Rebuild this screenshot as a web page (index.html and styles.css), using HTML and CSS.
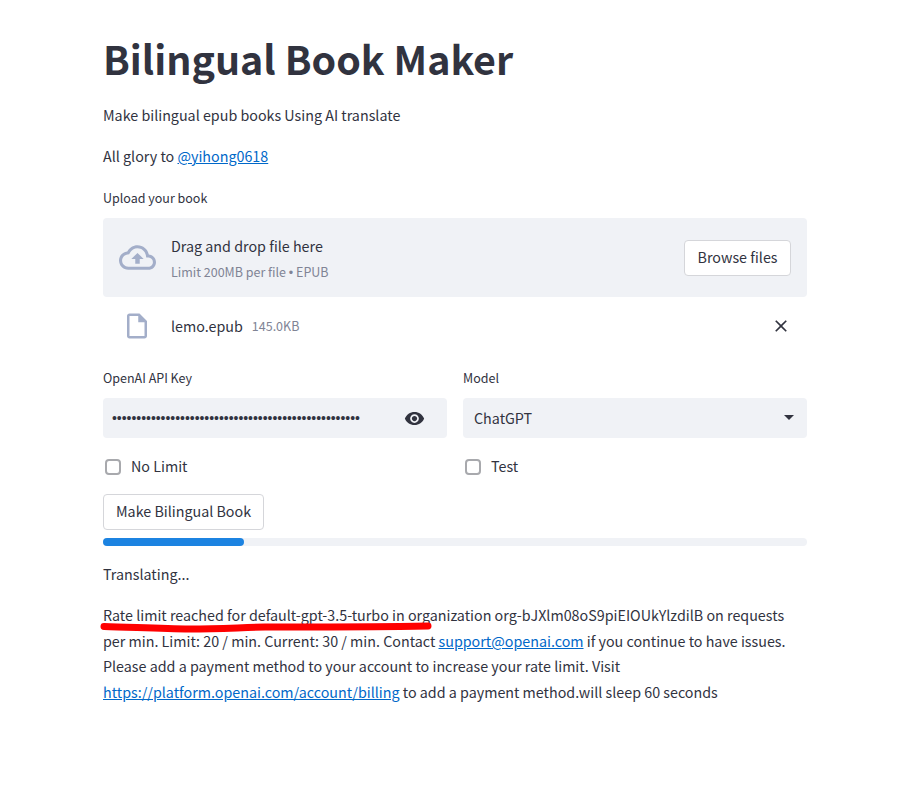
FILE: index.html
```html
<!DOCTYPE html>
<html lang="en">

<head>
    <meta charset="UTF-8">
    <meta name="viewport" content="width=device-width, initial-scale=1.0">
    <title>Bilingual Book Maker</title>
    <link rel="stylesheet" href="styles.css">
</head>

<body>
    <div class="main">
        <h1>Bilingual Book Maker</h1>
        <p class="intro">Make bilingual epub books Using AI translate</p>
        <p class="glory">All glory to <a href="#">@yihong0618</a></p>

        <div class="label upload-label">Upload your book</div>
        <div class="dropzone">
            <svg class="cloud" viewBox="0 0 24 24" width="37" height="37">
                <path fill="#a3aec9" d="M19.35 10.04C18.67 6.59 15.64 4 12 4 9.11 4 6.6 5.64 5.35 8.04 2.34 8.36 0 10.91 0 14c0 3.31 2.69 6 6 6h13c2.76 0 5-2.24 5-5 0-2.64-2.05-4.78-4.65-4.96zM19 18H6c-2.21 0-4-1.79-4-4 0-2.05 1.53-3.76 3.56-3.97l1.07-.11.5-.95C8.08 7.14 9.94 6 12 6c2.62 0 4.88 1.86 5.39 4.43l.3 1.5 1.53.11c1.56.1 2.78 1.41 2.78 2.96 0 1.65-1.35 3-3 3zM8 13h2.55v3h2.9v-3H16l-4-4z"/>
            </svg>
            <div class="drop-text">
                <div class="drop-title">Drag and drop file here</div>
                <div class="drop-limit">Limit 200MB per file <span class="sep">•</span> EPUB</div>
            </div>
            <button class="btn browse">Browse files</button>
        </div>

        <div class="file-row">
            <svg class="file-icon" viewBox="0 0 24 24" width="30" height="30">
                <path fill="#a3aec9" d="M14 2H6c-1.1 0-2 .9-2 2v16c0 1.1.9 2 2 2h12c1.1 0 2-.9 2-2V8l-6-6zM6 20V4h7v5h5v11H6z"/>
            </svg>
            <span class="file-name">lemo.epub</span>
            <span class="file-size">145.0KB</span>
            <svg class="file-close" viewBox="0 0 24 24" width="20" height="20">
                <path fill="#31333f" d="M19 6.41 17.59 5 12 10.59 6.41 5 5 6.41 10.59 12 5 17.59 6.41 19 12 13.41 17.59 19 19 17.59 13.41 12z"/>
            </svg>
        </div>

        <div class="columns">
            <div class="col">
                <div class="label">OpenAI API Key</div>
                <div class="field">
                    <span class="dots">•••••••••••••••••••••••••••••••••••••••••••••••••••</span>
                    <svg class="eye" viewBox="0 0 24 24" width="21" height="21">
                        <path fill="#31333f" d="M12 4.5C7 4.5 2.73 7.61 1 12c1.73 4.39 6 7.5 11 7.5s9.27-3.11 11-7.5c-1.73-4.39-6-7.5-11-7.5zM12 17c-2.76 0-5-2.24-5-5s2.24-5 5-5 5 2.24 5 5-2.24 5-5 5zm0-8c-1.66 0-3 1.34-3 3s1.34 3 3 3 3-1.34 3-3-1.34-3-3-3z"/>
                    </svg>
                </div>
                <label class="check"><span class="box"></span><span class="check-text">No Limit</span></label>
            </div>
            <div class="col">
                <div class="label">Model</div>
                <div class="field select">
                    <span class="select-value">ChatGPT</span>
                    <span class="caret"></span>
                </div>
                <label class="check"><span class="box"></span><span class="check-text">Test</span></label>
            </div>
        </div>

        <button class="btn make">Make Bilingual Book</button>
        <div class="progress">
            <div class="bar" style="width: 20%"></div>
        </div>

        <p class="status">Translating...</p>
        <p class="message">Rate limit reached for default-gpt-3.5-turbo in organization org-bJXlm08oS9piEIOUkYlzdilB on requests per min. Limit: 20 / min. Current: 30 / min. Contact <a href="#">support@openai.com</a> if you continue to have issues. Please add a payment method to your account to increase your rate limit. Visit <a href="#">https://platform.openai.com/account/billing</a> to add a payment method.will sleep 60 seconds</p>

        <!-- red pen mark over the first line -->
        <svg class="scribble" width="340" height="24" viewBox="0 0 340 24">
            <path d="M4 13.5 C 30 14 60 16 90 16 C 120 16 140 14.500 165 14 C 220 14 280 14 328 13" fill="none" stroke="#ff0000" stroke-width="7" stroke-linecap="round"/>
        </svg>
    </div>
</body>

</html>
```

FILE: styles.css
```css
* {
    padding: 0;
    margin: 0;
    box-sizing: border-box;
}

body {
    background-color: white;
    color: #31333f;
    font-family: "Noto Sans CJK SC", "Noto Sans", sans-serif;
    font-size: 14.3px;
}

a {
    color: #0068c9;
}

.main {
    position: relative;
    width: 704px;
    margin-left: 103px;
    padding-top: 31px;
}

h1 {
    font-size: 39.4px;
    font-weight: 700;
    line-height: 54px;
    margin-bottom: 18px;
}

.intro,
.glory,
.status {
    line-height: 24px;
}

.glory {
    margin-top: 17px;
}

.label {
    font-size: 12.5px;
    line-height: 20px;
    margin-bottom: 10px;
}

.upload-label {
    margin-top: 20px;
}

.dropzone {
    display: flex;
    align-items: center;
    height: 79px;
    padding: 0 16px;
    background-color: #f0f2f6;
    border-radius: 4px;
}

.cloud {
    margin-right: 15px;
}

.drop-text {
    flex: 1;
}

.drop-title {
    line-height: 24px;
}

.drop-limit {
    margin-top: 5px;
    font-size: 12.5px;
    line-height: 18px;
    color: #808495;
}

.sep {
    font-family: "Liberation Sans", sans-serif;
}

.btn {
    height: 36px;
    padding: 0 12px 2px;
    background-color: white;
    border: 1px solid #d5d6da;
    border-radius: 4px;
    color: #31333f;
    font-family: inherit;
    font-size: 14.3px;
    cursor: pointer;
}

.browse {
    padding: 0 12.5px 2px;
}

.file-row {
    display: flex;
    align-items: center;
    height: 58px;
    padding-left: 19px;
}

.file-icon {
    margin-right: 19px;
}

.file-name {
    margin-right: 9px;
    margin-bottom: 2px;
}

.file-size {
    margin-bottom: 2px;
    font-size: 12.5px;
    color: #808495;
}

.file-close {
    margin-left: auto;
    margin-right: 16px;
}

.columns {
    display: grid;
    grid-template-columns: 344px 344px;
    gap: 16px;
    margin-top: 13px;
}

.field {
    display: flex;
    align-items: center;
    justify-content: space-between;
    height: 40px;
    padding: 0 22px 0 9px;
    background-color: #f0f2f6;
    border-radius: 4px;
}

.dots {
    font-family: "Liberation Sans", sans-serif;
    font-size: 14px;
    letter-spacing: -0.04px;
    overflow: hidden;
    white-space: nowrap;
}

.select {
    padding: 0 13px 0 11px;
}

.select-value {
    margin-bottom: 2px;
}

.caret {
    width: 0;
    height: 0;
    margin-bottom: 1px;
    border-left: 5px solid transparent;
    border-right: 5px solid transparent;
    border-top: 5px solid #31333f;
}

.check {
    display: flex;
    align-items: center;
    height: 24px;
    margin-top: 17px;
    padding-left: 2px;
}

.check-text {
    margin-bottom: 3px;
}

.box {
    width: 16px;
    height: 16px;
    margin-right: 10px;
    border: 2px solid #a8a9ad;
    border-radius: 4px;
}

.make {
    display: block;
    margin-top: 15px;
    padding-bottom: 4px;
}

.progress {
    height: 8px;
    margin-top: 8px;
    background-color: #f0f2f6;
    border-radius: 4px;
}

.bar {
    height: 100%;
    background-color: #1c83e1;
    border-radius: 4px;
}

.status {
    margin-top: 16px;
}

.message {
    margin-top: 16.2px;
    line-height: 25.6px;
}

.scribble {
    position: absolute;
    left: -3px;
    top: 613px;
}
```
